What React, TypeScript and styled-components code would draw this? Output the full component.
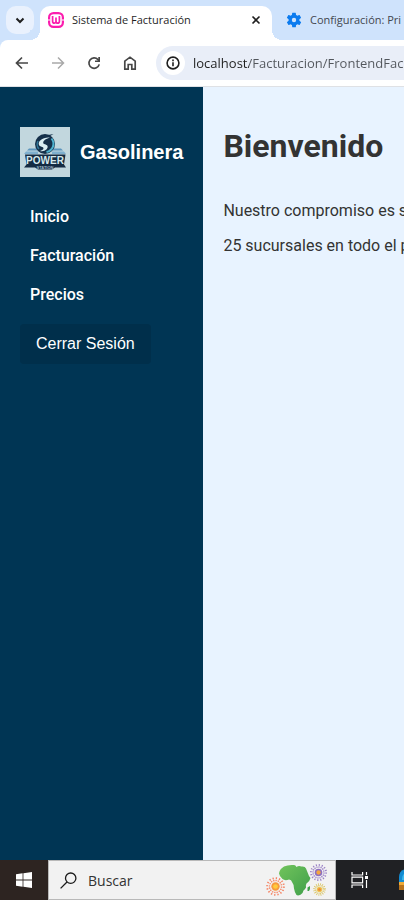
import React from "react";
import styled, { createGlobalStyle } from "styled-components";

const GlobalStyle = createGlobalStyle`
  *, *::before, *::after { box-sizing: border-box; }
  body { margin: 0; background: #e8f3ff; }
  button, input { font: inherit; }
`;

const systemFont = `"Open Sans", "Noto Sans", sans-serif`;

const Screen = styled.div`
  display: flex;
  flex-direction: column;
  min-height: 100vh;
  overflow: hidden;
  font-family: ${systemFont};
`;

const PlainButton = styled.button`
  display: flex;
  align-items: center;
  justify-content: center;
  flex: none;
  padding: 0;
  border: 0;
  background: transparent;
  color: #474747;
  cursor: pointer;
`;

/* ---------- Browser frame ---------- */

const TabStrip = styled.div`
  display: flex;
  align-items: flex-start;
  height: 40px;
  padding: 6px 0 0 6px;
  background: #cfe3fc;
  overflow: hidden;
`;

const TabSearch = styled(PlainButton)`
  width: 28px;
  height: 28px;
  margin-right: 6px;
  border-radius: 10px;
  background: #e9f1fd;
  color: #1f1f1f;
`;

const Tab = styled.div<{ $active?: boolean }>`
  position: relative;
  display: flex;
  align-items: center;
  flex: none;
  gap: 8px;
  width: ${(p) => (p.$active ? "232px" : "240px")};
  height: 34px;
  padding: 0 8px 6px ${(p) => (p.$active ? "8px" : "14px")};
  border-radius: 10px 10px 0 0;
  background: ${(p) => (p.$active ? "#ffffff" : "transparent")};
  color: ${(p) => (p.$active ? "#1f1f1f" : "#43474e")};
  font-size: 11px;
  line-height: 16px;
  white-space: nowrap;

  &::before,
  &::after {
    content: "";
    display: ${(p) => (p.$active ? "block" : "none")};
    position: absolute;
    bottom: 0;
    width: 10px;
    height: 10px;
  }
  &::before {
    right: 100%;
    background: radial-gradient(circle at 0 0, #cfe3fc 10px, #ffffff 10px);
  }
  &::after {
    left: 100%;
    background: radial-gradient(circle at 100% 0, #cfe3fc 10px, #ffffff 10px);
  }
`;

const TabTitle = styled.span`
  flex: 1;
  overflow: hidden;
`;

const CloseTab = styled(PlainButton)`
  width: 16px;
  height: 16px;
  color: #1f1f1f;
`;

const ToolbarBackdrop = styled.div`
  background: #cfe3fc;
`;

const Toolbar = styled.div`
  display: flex;
  align-items: center;
  gap: 8px;
  height: 47px;
  padding: 0 0 1px 8px;
  border-bottom: 1px solid #dfe1e5;
  border-radius: 8px 0 0 0;
  background: #ffffff;
`;

const NavButton = styled(PlainButton)`
  width: 28px;
  height: 28px;
  &:disabled { color: #a9a9a9; }
`;

const AddressBar = styled.label`
  display: flex;
  align-items: center;
  flex: 1;
  min-width: 0;
  gap: 8px;
  height: 34px;
  margin-left: 4px;
  padding-left: 5px;
  border-radius: 17px 0 0 17px;
  background: #e9eef8;
`;

const SiteInfo = styled(PlainButton)`
  width: 24px;
  height: 24px;
  border-radius: 50%;
  background: #ffffff;
  color: #1f1f1f;
`;

const AddressInput = styled.input`
  flex: 1;
  min-width: 0;
  height: 24px;
  padding: 0;
  border: 0;
  outline: 0;
  background: linear-gradient(90deg, #1f1f1f 56px, #52565c 56px);
  background-clip: text;
  color: transparent;
  font-size: 13px;
`;

/* ---------- Web page ---------- */

const Page = styled.div`
  display: flex;
  flex: 1;
  font-family: Roboto, sans-serif;
`;

const Sidebar = styled.aside`
  flex: none;
  padding: 40px 20px;
  background: #003554;
  color: #ffffff;
`;

const Brand = styled.div`
  display: flex;
  align-items: center;
  gap: 10px;
  margin-bottom: 20px;
  font: bold 20px "Liberation Sans", sans-serif;
`;

const Menu = styled.ul`
  margin: 0 0 10px;
  padding: 0;
  list-style: none;
`;

const MenuLink = styled.a`
  display: block;
  padding: 10px;
  color: #ffffff;
  font-size: 16px;
  font-weight: 500;
  line-height: 19px;
  text-decoration: none;
`;

const LogoutButton = styled.button`
  padding: 10px 16px;
  border: 0;
  border-radius: 4px;
  background: #002f4b;
  color: #ffffff;
  font: 16px/20px "Liberation Sans", sans-serif;
  cursor: pointer;
`;

const Main = styled.main`
  flex: 1;
  min-width: 0;
  padding: 40px 0 20px 20px;
  overflow: hidden;
  background: #e8f3ff;
  color: #333333;
  white-space: nowrap;
`;

const Title = styled.h1`
  margin: 0 0 28px;
  font-size: 32px;
  line-height: 38px;
`;

const Lines = styled.p`
  margin: 0;
  font-size: 16px;
  line-height: 35px;
`;

/* ---------- Taskbar ---------- */

const Taskbar = styled.footer`
  display: flex;
  height: 40px;
  background: #202124;
  overflow: hidden;
`;

const StartButton = styled(PlainButton)`
  width: 48px;
  background: #2d2421;
`;

const SearchBox = styled.label`
  display: flex;
  align-items: center;
  flex: none;
  gap: 11px;
  width: 288px;
  padding: 0 7px 0 11px;
  border: 1px solid #b9b9b9;
  background: #f2f2f2;
`;

const SearchInput = styled.input`
  flex: 1;
  min-width: 0;
  padding: 0;
  border: 0;
  outline: 0;
  background: transparent;
  font-size: 14px;
  &::placeholder { color: #333333; opacity: 1; }
`;

const TaskButton = styled(PlainButton)`
  width: 48px;
`;

const AppButton = styled(PlainButton)`
  width: 48px;
`;

/* ---------- Drawings ---------- */

const Favicon = () => (
  <svg width="16" height="16" viewBox="0 0 16 16" fill="none" aria-hidden="true">
    <rect x="1.1" y="1.1" width="13.8" height="13.8" rx="4.4" stroke="#fb1cae" strokeWidth="2.2" />
    <path d="M0 8h2.2M13.8 8H16" stroke="#fff" strokeWidth="1.2" />
    <path d="M4.6 4v5.2c0 2.6 3.4 2.6 3.4 0V5.6v3.6c0 2.6 3.4 2.6 3.4 0V4" stroke="#fb1cae" strokeWidth="1.7" />
  </svg>
);

const Gear = () => (
  <svg width="16" height="16" viewBox="1 1 22 22" fill="#0b7bef" aria-hidden="true">
    <path d="M19.4 13c.04-.3.06-.66.06-1s-.02-.7-.07-1l2.1-1.65a.5.5 0 0 0 .12-.64l-2-3.46a.5.5 0 0 0-.6-.22l-2.5 1a7.3 7.3 0 0 0-1.7-.98l-.37-2.65A.5.5 0 0 0 14 2h-4a.5.5 0 0 0-.5.42l-.37 2.65c-.6.25-1.17.59-1.7.98l-2.49-1a.5.5 0 0 0-.6.22l-2 3.46a.5.5 0 0 0 .12.64L4.6 11a8 8 0 0 0 0 2l-2.1 1.65a.5.5 0 0 0-.12.64l2 3.46c.12.22.38.3.6.22l2.5-1c.52.4 1.08.73 1.69.98l.38 2.65c.03.24.25.4.49.4h4a.5.5 0 0 0 .49-.42l.38-2.65c.6-.25 1.17-.58 1.69-.98l2.49 1c.23.09.49 0 .6-.22l2-3.46a.5.5 0 0 0-.12-.64zM12 15a3 3 0 1 1 0-6 3 3 0 0 1 0 6z" />
  </svg>
);

const StrokeIcon = ({ d, size = 16, width = 2 }: { d: string; size?: number; width?: number }) => (
  <svg width={size} height={size} viewBox="0 0 16 16" fill="none" stroke="currentColor" strokeWidth={width} aria-hidden="true">
    <path d={d} />
  </svg>
);

const ReloadIcon = () => (
  <svg width="16" height="16" viewBox="0 0 16 16" aria-hidden="true">
    <path d="M13.2 9.4A5.2 5.2 0 1 1 12 4.6l1 1.2" fill="none" stroke="currentColor" strokeWidth="1.7" />
    <path d="M14 2v5H9V5.4h3.3V2z" fill="currentColor" />
  </svg>
);

const InfoIcon = () => (
  <svg width="16" height="16" viewBox="0 0 16 16" fill="none" stroke="currentColor" strokeWidth="1.6" aria-hidden="true">
    <circle cx="8" cy="8" r="5.9" />
    <path d="M8 7.2v4M8 4.6v1.6" />
  </svg>
);

const PowerLogo = () => (
  <svg width="50" height="50" viewBox="0 0 50 50" role="img" aria-label="Power Station">
    <rect width="50" height="50" fill="#c2d7de" />
    <path d="M9 21.5h8v2H7zM33 21.5h8l2 2H33z" fill="#5d95bd" />
    <path d="M6 24.5h12v2.5H4zM32 24.5h12l2 2.5H32z" fill="#7fb0cf" />
    <circle cx="25" cy="17" r="10" fill="#15304a" />
    <path d="M33.5 7L27 8.2C18 8 14.500 14 16.500 20c0-7 5-10.500 12-10z" fill="#15304a" />
    <path d="M30 10.500c-7-.8-12.500 3.500-11 7.500.8 2 4.500 1.500 4.500 3.200 0 1.300-2 2.300-3.500 2.800 5 1 8.500-2.500 7.500-5-.8-2-4.500-1.300-4.300-3.500.2-2.300 3.300-4 6.800-5z" fill="#d9edf2" />
    <path d="M31.500 11.500c4 5 1.500 12-5 13.500" fill="none" stroke="#4fb2cf" strokeWidth="2" />
    <path d="M18 14c-1.500 3-.8 6 1 8" fill="none" stroke="#2f7597" strokeWidth="1.400" />
    <path d="M5 27.500h40.500L44 37.500l2 3H35l-3 2H18l-3-2H4l2.500-3z" fill="#142b43" />
    <text x="25" y="37" textAnchor="middle" fill="#d6e9ed" fontFamily="Liberation Sans, sans-serif" fontWeight="bold" fontSize="10">POWER</text>
    <text x="25" y="41.500" textAnchor="middle" fill="#9fb9c6" fontFamily="Liberation Sans, sans-serif" fontWeight="bold" fontSize="4">STATION</text>
  </svg>
);

const WindowsLogo = () => (
  <svg width="16" height="16" viewBox="0 0 16 16" fill="#fff" aria-hidden="true">
    <path d="M0 2.2L6.6 1.3V7.5H0zM7.4 1.2L16 0v7.5H7.4zM0 8.400h6.600v6.300L0 13.800zM7.400 8.400H16V16l-8.600-1.200z" />
  </svg>
);

const SearchIcon = () => (
  <svg width="17" height="17" viewBox="0 0 17 17" fill="none" stroke="#1b1b1b" strokeWidth="1.3" aria-hidden="true">
    <circle cx="10.7" cy="6.2" r="5.2" />
    <path d="M7 10L.6 16.4" />
  </svg>
);

type BurstProps = { x: number; y: number; r: number; outer: string; ring: string; core: string };

const Burst = ({ x, y, r, outer, ring, core }: BurstProps) => {
  const spoke = (Math.PI * 2 * r) / 16;
  return (
    <g>
      <circle cx={x} cy={y} r={r} fill="none" stroke={outer} strokeWidth="1.8" strokeDasharray={`${spoke * 0.4} ${spoke * 0.6}`} />
      <circle cx={x} cy={y} r={r * 0.72} fill="none" stroke={outer} strokeWidth="1.4" strokeDasharray={`${spoke * 0.4} ${spoke * 0.3}`} />
      <circle cx={x} cy={y} r={r * 0.5} fill={ring} />
      <circle cx={x} cy={y} r={r * 0.28} fill={core} />
    </g>
  );
};

const AfricaDoodle = () => (
  <svg width="62" height="34" viewBox="0 0 62 34" aria-hidden="true">
    <defs>
      <linearGradient id="land" x1="0" y1="0" x2="1" y2="1">
        <stop offset="0" stopColor="#72c45c" />
        <stop offset="1" stopColor="#3f9f4a" />
      </linearGradient>
    </defs>
    <path d="M18 3.500Q22 1.500 28 2q1.500 0 2.500 2 2-1.500 5-.5 3.500-.5 4.500 2l2 5q1 3.500 2.500 4.500Q44 18 40.500 20.500q-1 1.500-.5 4-1 2-2.500 3-.5 3-3 4.200-2.500 1.300-4 .3-2-3-2.500-6.500 0-4-2-6.500-.5-2.500-3-2.500-4 1.500-6.500-.5Q13.500 13.500 13 10.500q.5-4.500 5-7z" fill="url(#land)" />
    <path d="M41.500 24.500l2.500-1.500v3l-1 2h-1.500z" fill="#3f9f4a" />
    <Burst x={9.5} y={23.5} r={8.4} outer="#f58463" ring="#f79a3c" core="#ffcb3b" />
    <Burst x={52.5} y={9.5} r={7.600} outer="#9a80c6" ring="#8f71c0" core="#f5a63f" />
    <Burst x={53.5} y={26.5} r={5.400} outer="#d9c667" ring="#f0c552" core="#ef8d3b" />
  </svg>
);

const TaskViewIcon = () => (
  <svg width="18" height="16" viewBox="0 0 18 16" fill="none" stroke="#fff" strokeWidth="1.2" aria-hidden="true">
    <path d="M1 0v3h10.600V0M1 16v-3h10.600v3M1 5.200h10.600v5.600H1zM15.500 0v3M15.500 8v8" />
    <path d="M14 4h3v3h-3z" fill="#fff" stroke="none" />
  </svg>
);

const AppIcon = () => (
  <svg width="18" height="24" viewBox="0 0 18 24" aria-hidden="true">
    <path d="M0 15V9c0-5 3-8 8-8h10v14z" fill="#128bd2" />
    <path d="M3 12c0-5 2-8 8-8h7v8z" fill="#3ab8ee" />
    <path d="M0 14h18v8H0z" fill="#b9731c" />
    <path d="M0 14h18v3H0z" fill="#efaa38" />
  </svg>
);

const menuItems = ["Inicio", "Facturación", "Precios"];

export default function App() {
  return (
    <Screen>
      <GlobalStyle />
      <header>
        <TabStrip>
          <TabSearch aria-label="Buscar pestañas">
            <StrokeIcon d="M4.5 6.5L8 10l3.5-3.5" />
          </TabSearch>
          <Tab $active>
            <Favicon />
            <TabTitle>Sistema de Facturación</TabTitle>
            <CloseTab aria-label="Cerrar pestaña">
              <StrokeIcon d="M4.5 4.5l7 7M11.5 4.5l-7 7" width={1.6} />
            </CloseTab>
          </Tab>
          <Tab>
            <Gear />
            <TabTitle>Configuración: Pri</TabTitle>
          </Tab>
        </TabStrip>
        <ToolbarBackdrop>
          <Toolbar>
            <NavButton aria-label="Atrás">
              <StrokeIcon d="M14 8H3M8 2.5L2.5 8 8 13.5" width={1.7} />
            </NavButton>
            <NavButton aria-label="Adelante" disabled>
              <StrokeIcon d="M2 8h11M8 2.5L13.5 8 8 13.5" width={1.5} />
            </NavButton>
            <NavButton aria-label="Recargar">
              <ReloadIcon />
            </NavButton>
            <NavButton aria-label="Página principal">
              <StrokeIcon d="M2.8 6.2L8 2.2l5.2 4v8H9.8V9.5H6.2v4.700H2.800z" width={1.7} />
            </NavButton>
            <AddressBar>
              <SiteInfo aria-label="Información del sitio">
                <InfoIcon />
              </SiteInfo>
              <AddressInput aria-label="Dirección" defaultValue="localhost/Facturacion/FrontendFac" />
            </AddressBar>
          </Toolbar>
        </ToolbarBackdrop>
      </header>

      <Page>
        <Sidebar>
          <Brand>
            <PowerLogo />
            <span>Gasolinera</span>
          </Brand>
          <nav>
            <Menu>
              {menuItems.map((item) => (
                <li key={item}>
                  <MenuLink href="#">{item}</MenuLink>
                </li>
              ))}
            </Menu>
          </nav>
          <LogoutButton>Cerrar Sesión</LogoutButton>
        </Sidebar>
        <Main>
          <Title>Bienvenido</Title>
          <Lines>
            Nuestro compromiso es s
            <br />
            25 sucursales en todo el p
          </Lines>
        </Main>
      </Page>

      <Taskbar>
        <StartButton aria-label="Inicio de Windows">
          <WindowsLogo />
        </StartButton>
        <SearchBox>
          <SearchIcon />
          <SearchInput aria-label="Buscar" placeholder="Buscar" />
          <AfricaDoodle />
        </SearchBox>
        <TaskButton aria-label="Vista de tareas">
          <TaskViewIcon />
        </TaskButton>
        <AppButton aria-label="Aplicación">
          <AppIcon />
        </AppButton>
      </Taskbar>
    </Screen>
  );
}
